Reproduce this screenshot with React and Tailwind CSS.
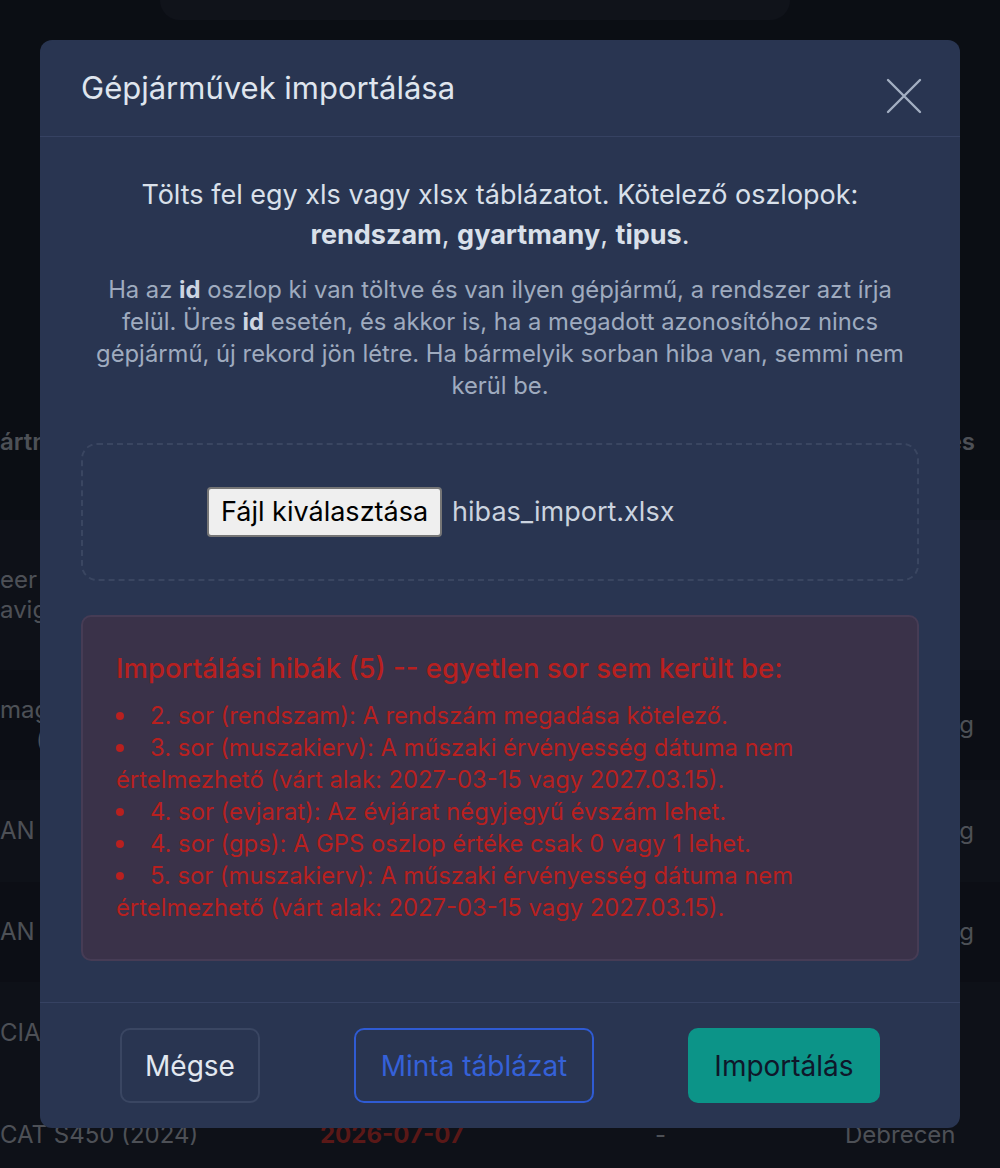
import React from "react";

const rows = [
  { h: "h-[150px]", a: ["eer", "avig"], right: "" },
  { h: "h-[110px]", a: ["mag", "("], right: "g" },
  { h: "h-[102px]", a: ["AN T"], right: "g" },
  { h: "h-[100px]", a: ["AN T"], right: "g" },
  { h: "h-[101px]", a: ["CIA c"], right: "" },
];

const errors = [
  "2. sor (rendszam): A rendszám megadása kötelező.",
  "3. sor (muszakierv): A műszaki érvényesség dátuma nem értelmezhető (várt alak: 2027-03-15 vagy 2027.03.15).",
  "4. sor (evjarat): Az évjárat négyjegyű évszám lehet.",
  "4. sor (gps): A GPS oszlop értéke csak 0 vagy 1 lehet.",
  "5. sor (muszakierv): A műszaki érvényesség dátuma nem értelmezhető (várt alak: 2027-03-15 vagy 2027.03.15).",
];

function Background() {
  return (
    <div className="min-h-[1168px] bg-[#171c29] text-[24px] text-[#9aa1ad] overflow-hidden">
      <div className="mx-[160px] w-[630px] h-[20px] rounded-b-[24px] bg-[#202635]"></div>
      <div className="mt-[370px]">
        <div className="h-[130px] flex items-start pt-[34px] justify-between font-semibold">
          <span>ártn</span>
          <span className="pr-[25px]">es</span>
        </div>
        {rows.map((r, i) => (
          <div
            key={i}
            className={`${r.h} flex items-center justify-between ${i % 2 === 0 ? "bg-[#1c2231]" : "bg-[#181d2a]"}`}
          >
            <div className="flex flex-col leading-[30px]">
              {r.a.map((t, j) => (
                <span key={j} className={j === 1 && t === "(" ? "pl-[36px]" : ""}>{t}</span>
              ))}
            </div>
            <span className="pr-[26px]">{r.right}</span>
          </div>
        ))}
        <div className="h-[100px] flex items-start pt-[34px] bg-[#1c2231]">
          <span className="w-[320px]">CAT S450 (2024)</span>
          <span className="w-[335px] font-bold text-[#b4312f]">2026-07-07</span>
          <span className="w-[190px]">-</span>
          <span>Debrecen</span>
        </div>
      </div>
    </div>
  );
}

export default function App() {
  return (
    <div className="relative font-['Inter',_'Noto_Sans',_sans-serif]">
      <Background />
      <div className="absolute inset-0 bg-black/50 flex justify-center">
        <div className="mt-[40px] w-[920px] h-[1088px] rounded-[12px] bg-[#293551] flex flex-col">
          <div className="h-[97px] flex items-center justify-between pl-[41px] pr-[38px] border-b border-[#364262]">
            <h2 className="text-[31px] text-[#dfe5ee]">Gépjárművek importálása</h2>
            <button className="text-[#a3afc2] pt-[16px]">
              <svg width="36" height="36" viewBox="0 0 36 36" fill="none" stroke="currentColor" strokeWidth="2.4" strokeLinecap="round">
                <path d="M2 2 L34 34 M34 2 L2 34" />
              </svg>
            </button>
          </div>

          <div className="flex-1 px-[41px] pt-[38px]">
            <p className="text-center text-[27px] leading-[40px] text-[#d9e0ea]">
              Tölts fel egy xls vagy xlsx táblázatot. Kötelező oszlopok:
              <br />
              <b className="font-bold">rendszam</b>, <b className="font-bold">gyartmany</b>, <b className="font-bold">tipus</b>.
            </p>
            <p className="mt-[19px] text-center text-[23.8px] leading-[32px] text-[#9fabbf]">
              Ha az <b className="font-bold text-[#cdd5e1]">id</b> oszlop ki van töltve és van ilyen gépjármű, a rendszer azt írja
              <br />
              felül. Üres <b className="font-bold text-[#cdd5e1]">id</b> esetén, és akkor is, ha a megadott azonosítóhoz nincs
              <br />
              gépjármű, új rekord jön létre. Ha bármelyik sorban hiba van, semmi nem
              <br />
              kerül be.
            </p>

            <div className="mt-[41px] h-[138px] rounded-[16px] border-2 border-dashed border-[#3a4661] flex items-center pl-[124px]">
              <button className="h-[50px] px-[12px] bg-[#efefef] border-2 border-[#767676] rounded-[4px] text-[27px] text-black">
                Fájl kiválasztása
              </button>
              <span className="ml-[10px] text-[27px] text-[#cbd3df]">hibas_import.xlsx</span>
            </div>

            <div className="mt-[34px] rounded-[10px] border-2 border-[#463c55] bg-[#3a3249] px-[33px] pt-[32px] pb-[35px] text-[#b8201f]">
              <h3 className="text-[27.5px] leading-[38px] font-medium">Importálási hibák (5) -- egyetlen sor sem került be:</h3>
              <ul className="mt-[13px] text-[23.8px] leading-[32px]">
                {errors.map((e, i) => (
                  <li key={i}>
                    <span className="inline-block align-middle w-[8px] h-[8px] rounded-full bg-[#b8201f] mr-[26px] -mt-[4px]"></span>
                    {e}
                  </li>
                ))}
              </ul>
            </div>
          </div>

          <div className="h-[126px] border-t border-[#364262] flex items-center justify-between px-[80px] text-[28px]">
            <button className="w-[140px] h-[75px] rounded-[10px] border-2 border-[#3a4662] text-[#e2e8f0]">Mégse</button>
            <button className="w-[240px] h-[75px] rounded-[10px] border-2 border-[#2f5bd3] text-[#3561d8]">Minta táblázat</button>
            <button className="w-[192px] h-[75px] rounded-[10px] bg-[#0c9488] text-[#0f172a]">Importálás</button>
          </div>
        </div>
      </div>
    </div>
  );
}
